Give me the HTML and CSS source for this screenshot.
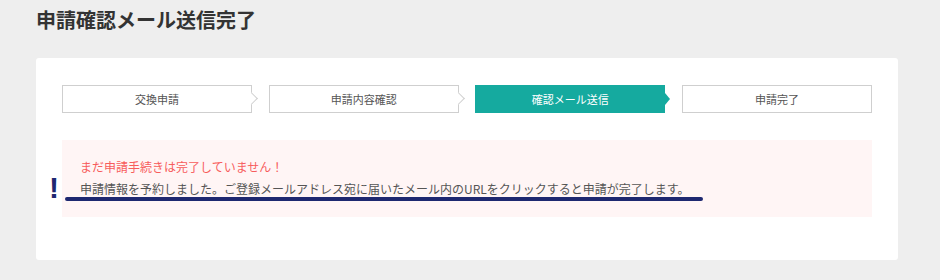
FILE: index.html
```html
<!DOCTYPE html>
<html lang="ja">
<head>
<meta charset="UTF-8" />
<title>申請確認メール送信完了</title>
<link rel="stylesheet" href="styles.css">
</head>
<body>

<h1 class="page-title">申請確認メール送信完了</h1>

<div class="card">

  <!-- Steps -->
  <ol class="steps">
    <li class="step">交換申請</li>
    <li class="step">申請内容確認</li>
    <li class="step active">確認メール送信</li>
    <li class="step last">申請完了</li>
  </ol>

  <!-- Notice -->
  <div class="notice">
    <p class="notice-title">まだ申請手続きは完了していません！</p>
    <p class="notice-text">申請情報を予約しました。ご登録メールアドレス宛に届いたメール内のURLをクリックすると申請が完了します。</p>
    <span class="mark">!</span>
    <span class="mark-line"></span>
  </div>

</div>

</body>
</html>
```

FILE: styles.css
```css
body {
  margin: 0;
  background: #eeeeee;
  font-family: "Noto Sans CJK JP", "Liberation Sans", sans-serif;
  color: #555;
}
.page-title {
  margin: 0;
  padding: 6px 36px 0;
  font-size: 20px;
  line-height: 28px;
  font-weight: bold;
  color: #333;
}
.card {
  background: white;
  margin: 24px 42px 20px 36px;
  padding: 27px 26px 43px;
  border-radius: 3px;
}
.steps {
  list-style: none;
  margin: 0 0 27px;
  padding: 0;
  display: flex;
  justify-content: space-between;
}
.step {
  position: relative;
  width: 190px;
  height: 28px;
  box-sizing: border-box;
  border: 1px solid #cfcfcf;
  background: white;
  display: flex;
  align-items: center;
  justify-content: center;
  font-size: 11px;
  color: #555;
}
.step::after {
  content: "";
  position: absolute;
  right: -5px;
  top: 50%;
  width: 8px;
  height: 8px;
  margin-top: -5px;
  background: white;
  border-top: 1px solid #cfcfcf;
  border-right: 1px solid #cfcfcf;
  transform: rotate(45deg);
}
.step.last::after {
  display: none;
}
.step.active {
  background: #15aa9f;
  border-color: #15aa9f;
  color: white;
}
.step.active::after {
  right: -6px;
  width: 0;
  height: 0;
  margin-top: -6px;
  background: none;
  border-top: 6px solid transparent;
  border-bottom: 6px solid transparent;
  border-right: none;
  border-left: 5px solid #15aa9f;
  transform: none;
}
.notice {
  position: relative;
  background: #fff5f5;
  padding: 16px 18px 17px;
}
.notice p {
  margin: 0;
  font-size: 12px;
  line-height: 22px;
}
.notice-title {
  color: #f75c5c;
}
.notice-text {
  color: #555;
}
.mark {
  position: absolute;
  left: -13px;
  top: 33px;
  font-family: "Liberation Sans", sans-serif;
  font-size: 30px;
  line-height: 30px;
  font-weight: bold;
  color: #1e2870;
}
.mark-line {
  position: absolute;
  left: 3px;
  top: 57px;
  width: 638px;
  height: 4px;
  border-radius: 2px;
  background: #1e2870;
}
```
